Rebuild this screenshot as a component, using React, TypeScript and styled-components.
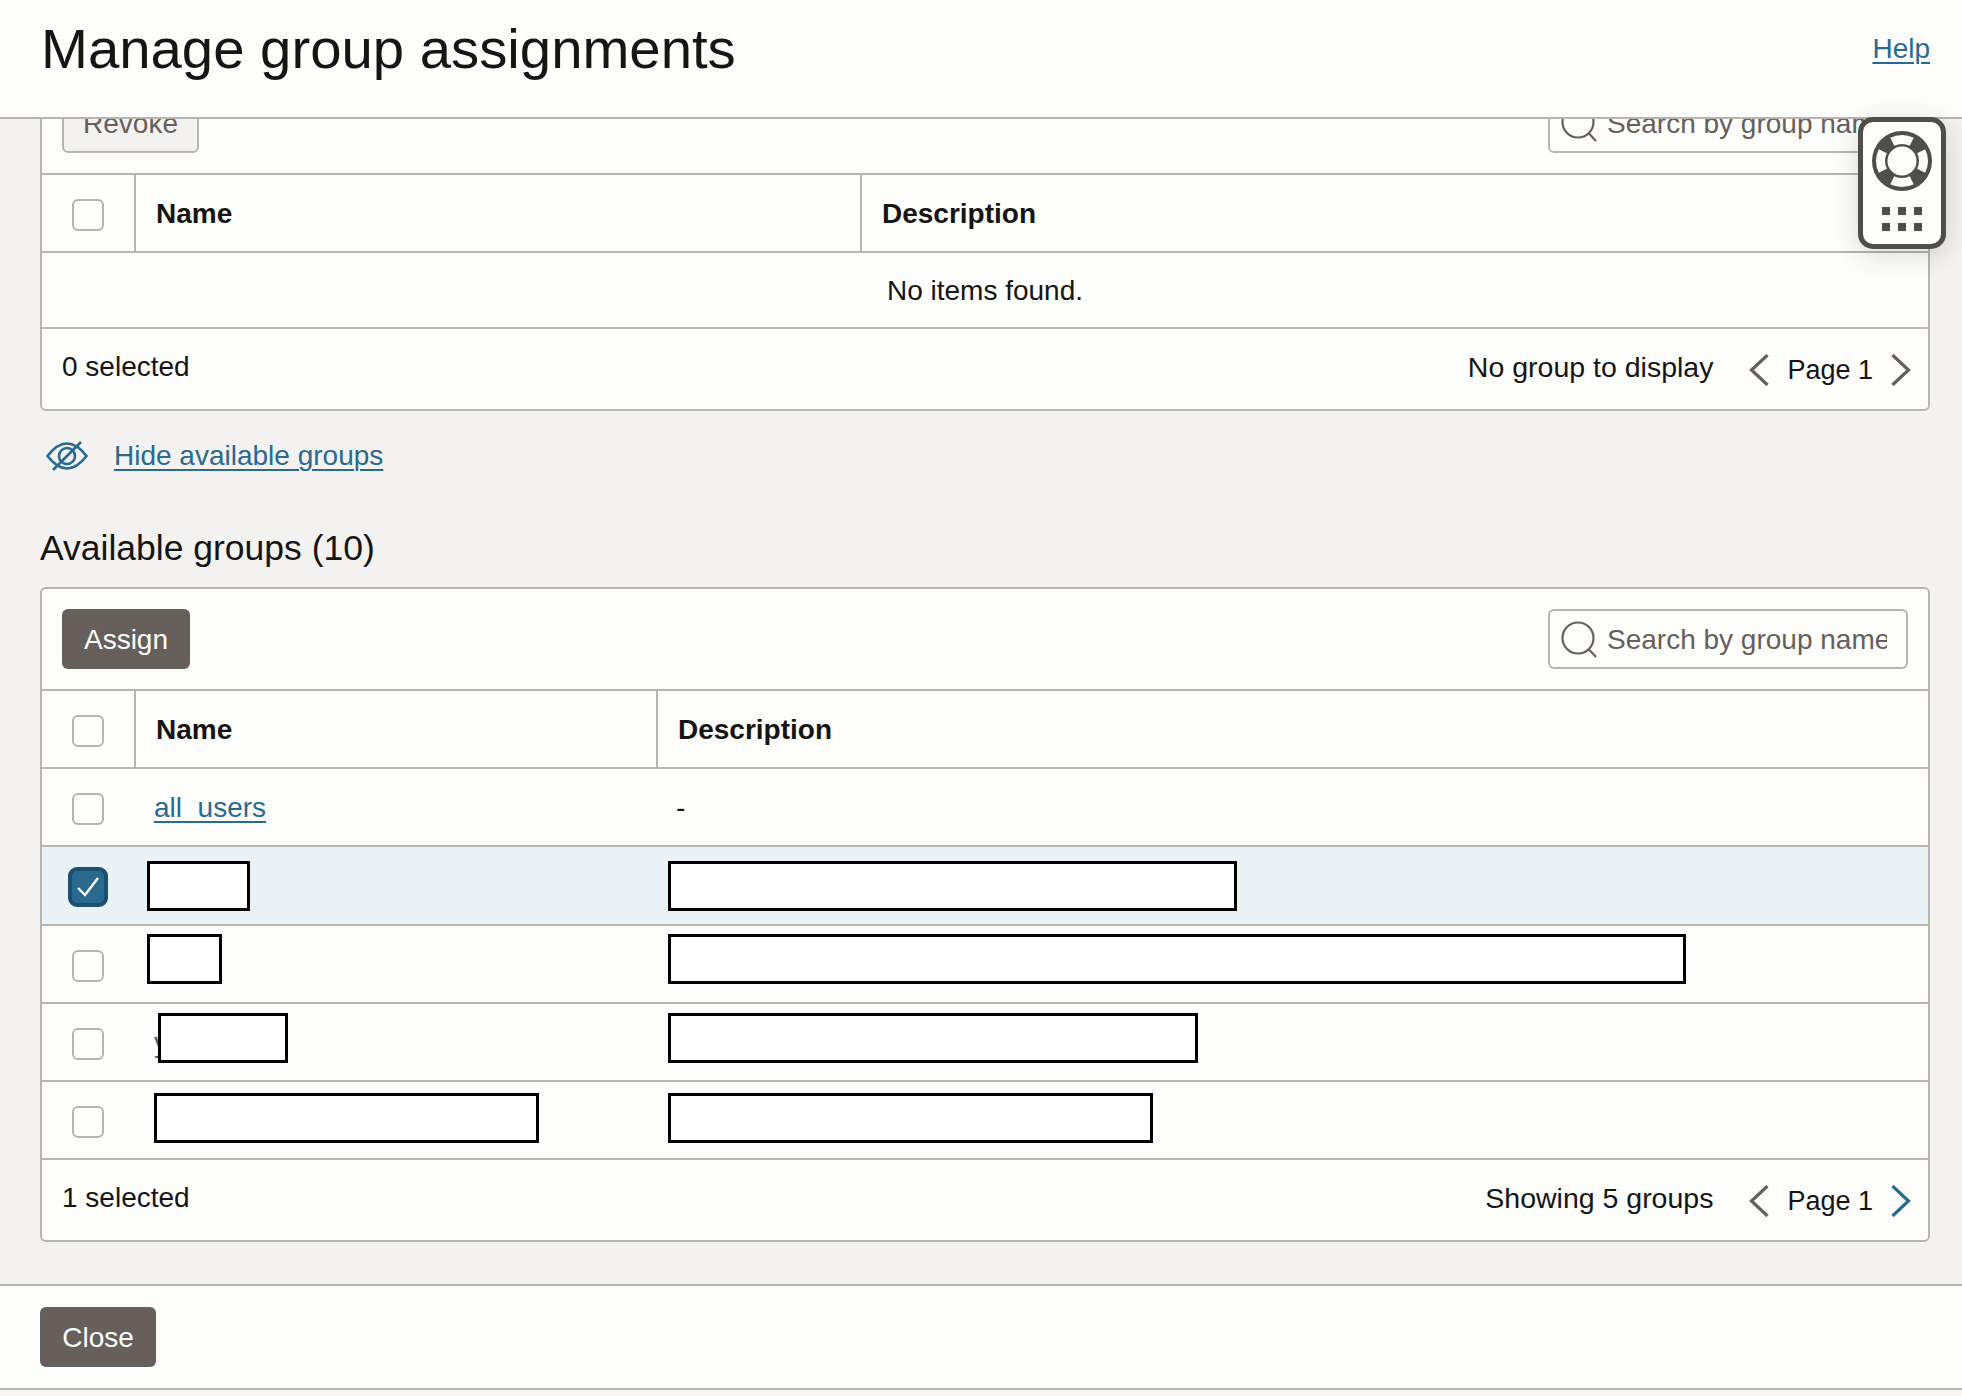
import React, { FC } from 'react'
import styled, { createGlobalStyle } from 'styled-components'

const colors = {
    panel: '#fdfdfb',
    page: '#f3f2f1',
    line: '#b8b4ae',
    text: '#161513',
    muted: '#665f5b',
    link: '#2a6a8f',
    button: '#665f5b',
    selected: '#eaf2f6',
    widget: '#504e4b',
}

const GlobalStyle = createGlobalStyle`
    html, body {
        margin: 0;
        padding: 0;
        height: 100%;
    }
    body {
        font-family: "Liberation Sans", Arial, sans-serif;
        font-size: 28px;
        color: ${colors.text};
        background: #f7f6f5;
    }
`

const Page = styled.div`
    position: relative;
    display: flex;
    flex-direction: column;
    height: 1396px;
    overflow: hidden;
`
const Header = styled.header`
    display: flex;
    flex: none;
    justify-content: space-between;
    align-items: center;
    box-sizing: border-box;
    height: 119px;
    padding: 0 32px 19px 41px;
    background: ${colors.panel};
    border-bottom: 2px solid ${colors.line};
`
const Title = styled.h1`
    margin: 0;
    font-size: 56.3px;
    font-weight: 400;
    line-height: 64px;
`
const TextLink = styled.a`
    color: ${colors.link};
    text-decoration: underline;
    text-underline-offset: 4px;
    text-decoration-thickness: 2px;
    cursor: pointer;
`
const Content = styled.main`
    flex: 1;
    min-height: 0;
    overflow: hidden;
    padding: 0 32px 0 40px;
    background: ${colors.page};
`
const ScrolledInner = styled.div`
    margin-top: -48px;
`
const Card = styled.section`
    box-sizing: border-box;
    background: ${colors.panel};
    border: 2px solid ${colors.line};
    border-radius: 6px;
`
const Toolbar = styled.div`
    display: flex;
    justify-content: space-between;
    align-items: center;
    box-sizing: border-box;
    height: 100px;
    padding: 0 20px;
`
const Button = styled.button<{ $width: number; $disabled?: boolean }>`
    box-sizing: border-box;
    width: ${p => p.$width}px;
    height: 60px;
    padding: 2px 0 0;
    font: inherit;
    font-size: 28px;
    color: ${p => (p.$disabled ? colors.muted : colors.panel)};
    background: ${p => (p.$disabled ? colors.page : colors.button)};
    border: ${p => (p.$disabled ? `2px solid ${colors.line}` : 'none')};
    border-radius: 6px;
`
const SearchBox = styled.label`
    display: flex;
    align-items: center;
    box-sizing: border-box;
    width: 360px;
    height: 60px;
    padding: 0 19px 0 11px;
    border: 2px solid ${colors.line};
    border-radius: 6px;
    background: ${colors.panel};
`
const SearchIcon = styled.svg`
    flex: none;
    width: 38px;
    height: 38px;
    margin-right: 8px;
    margin-top: 2px;
`
const SearchInput = styled.input`
    flex: 1;
    min-width: 0;
    padding: 2px 0 0;
    border: none;
    outline: none;
    background: transparent;
    font: inherit;
    font-size: 28px;
    color: ${colors.muted};
    &::placeholder {
        color: ${colors.muted};
        opacity: 1;
    }
`
const Row = styled.div<{ $nameWidth: number; $selected?: boolean }>`
    position: relative;
    display: grid;
    grid-template-columns: 92px ${p => p.$nameWidth}px 1fr;
    align-items: center;
    box-sizing: border-box;
    height: 78.25px;
    border-top: 2px solid ${colors.line};
    background: ${p => (p.$selected ? colors.selected : 'transparent')};
`
const HeadRow = styled(Row)`
    height: 78px;
`
const HeadCell = styled.div<{ $divider?: boolean }>`
    display: flex;
    align-items: center;
    box-sizing: border-box;
    height: 100%;
    padding: 2px 0 0 20px;
    font-weight: 700;
    font-size: 28px;
    border-left: ${p => (p.$divider ? `2px solid ${colors.line}` : 'none')};
`
const Cell = styled.div`
    padding: 2px 0 0 20px;
    white-space: nowrap;
`
const CheckCell = styled.div`
    display: flex;
    justify-content: center;
    align-items: center;
    height: 100%;
    padding-top: 4px;
    box-sizing: border-box;
`
const Check = styled.span<{ $checked?: boolean }>`
    display: flex;
    justify-content: center;
    align-items: center;
    box-sizing: border-box;
    width: ${p => (p.$checked ? 40 : 32)}px;
    height: ${p => (p.$checked ? 40 : 32)}px;
    border: ${p => (p.$checked ? '4px solid #1d4f6e' : `2px solid ${colors.line}`)};
    border-radius: ${p => (p.$checked ? 9 : 6)}px;
    background: ${p => (p.$checked ? colors.link : colors.panel)};
`
const Redaction = styled.div<{ $left: number; $top: number; $width: number }>`
    position: absolute;
    left: ${p => p.$left}px;
    top: ${p => p.$top}px;
    width: ${p => p.$width}px;
    height: 50px;
    box-sizing: border-box;
    background: #fff;
    border: 3px solid #000;
`
const EmptyRow = styled.div`
    display: flex;
    justify-content: center;
    align-items: center;
    box-sizing: border-box;
    height: 76px;
    padding-top: 2px;
    border-top: 2px solid ${colors.line};
`
const CardFooter = styled.div`
    display: flex;
    justify-content: space-between;
    align-items: flex-start;
    box-sizing: border-box;
    height: 82px;
    padding: 22px 17px 0 20px;
    border-top: 2px solid ${colors.line};
    line-height: 32px;
`
const FooterRight = styled.div`
    display: flex;
    align-items: flex-start;
    font-size: 28.5px;
`
const Pager = styled.div`
    display: flex;
    align-items: center;
    gap: 18px;
    margin: 3px 0 0 36px;
    font-size: 27px;
`
const Chevron = styled.svg`
    flex: none;
    width: 20px;
    height: 32px;
`
const ToggleRow = styled.div`
    display: flex;
    align-items: center;
    gap: 26px;
    height: 32px;
    margin: 29px 0 0 6px;
`
const SectionTitle = styled.h2`
    margin: 55px 0 18px;
    font-size: 35.5px;
    font-weight: 400;
    line-height: 42px;
`
const PageFooter = styled.footer`
    display: flex;
    flex: none;
    align-items: flex-start;
    box-sizing: border-box;
    height: 106px;
    padding: 21px 0 0 40px;
    margin-bottom: 6px;
    background: ${colors.panel};
    border-top: 2px solid ${colors.line};
    border-bottom: 2px solid ${colors.line};
`
const Widget = styled.aside`
    position: absolute;
    top: 117px;
    left: 1858px;
    display: flex;
    flex-direction: column;
    align-items: center;
    box-sizing: border-box;
    width: 88px;
    height: 132px;
    padding-top: 9px;
    background: ${colors.panel};
    border: 5px solid ${colors.widget};
    border-radius: 15px;
    box-shadow: 0 6px 26px rgba(0, 0, 0, 0.14);
`
const Grip = styled.div`
    display: grid;
    grid-template-columns: repeat(3, 8px);
    grid-auto-rows: 8px;
    gap: 8px;
    margin-top: 16px;
`
const GripDot = styled.span`
    background: ${colors.widget};
`

const PagerChevron: FC<{ dir: 'left' | 'right'; active?: boolean }> = ({ dir, active }) => (
    <Chevron viewBox="0 0 20 32" fill="none">
        <path
            d={dir === 'left' ? 'M18.500 1 2.500 16l16 15' : 'M1.500 1l16 15-16 15'}
            stroke={active ? colors.link : colors.muted}
            strokeWidth="3.200"
        />
    </Chevron>
)

const Search: FC<{}> = () => (
    <SearchBox>
        <SearchIcon viewBox="0 0 38 38" fill="none">
            <circle cx="17" cy="17" r="15.500" stroke={colors.muted} strokeWidth="2.200" />
            <path d="M27.500 28 35 36" stroke={colors.muted} strokeWidth="2.200" />
        </SearchIcon>
        <SearchInput placeholder="Search by group name" />
    </SearchBox>
)

const groups = [
    { id: 1, selected: true, boxes: [{ left: 105, top: 14, width: 103 }, { left: 626, top: 14, width: 569 }] },
    { id: 2, boxes: [{ left: 105, top: 8, width: 75 }, { left: 626, top: 8, width: 1018 }] },
    { id: 3, peek: 'y', boxes: [{ left: 116, top: 9, width: 130 }, { left: 626, top: 9, width: 530 }] },
    { id: 4, boxes: [{ left: 112, top: 11, width: 385 }, { left: 626, top: 11, width: 485 }] },
]

const NAME_WIDTH = 522

export default function App() {
    return (
        <Page>
            <GlobalStyle />
            <Header>
                <Title>Manage group assignments</Title>
                <TextLink>Help</TextLink>
            </Header>
            <Content>
                <ScrolledInner>
                    <Card>
                        <Toolbar>
                            <Button $width={137} $disabled>Revoke</Button>
                            <Search />
                        </Toolbar>
                        <HeadRow $nameWidth={726}>
                            <CheckCell><Check /></CheckCell>
                            <HeadCell $divider>Name</HeadCell>
                            <HeadCell $divider>Description</HeadCell>
                        </HeadRow>
                        <EmptyRow>No items found.</EmptyRow>
                        <CardFooter>
                            <span>0 selected</span>
                            <FooterRight>
                                <span>No group to display</span>
                                <Pager>
                                    <PagerChevron dir="left" />
                                    <span>Page 1</span>
                                    <PagerChevron dir="right" />
                                </Pager>
                            </FooterRight>
                        </CardFooter>
                    </Card>
                    <ToggleRow>
                        <svg width="42" height="32" viewBox="0 0 42 32" fill="none">
                            <path d="M1.500 16C8 7.500 14 3.500 21 3.500S34 7.500 40.500 16C34 24.500 28 28.500 21 28.500S8 24.500 1.500 16Z" stroke={colors.link} strokeWidth="2.600" />
                            <circle cx="21" cy="16" r="8" stroke={colors.link} strokeWidth="2.600" />
                            <path d="M35 2 7 30" stroke={colors.link} strokeWidth="2.600" />
                        </svg>
                        <TextLink>Hide available groups</TextLink>
                    </ToggleRow>
                    <SectionTitle>Available groups (10)</SectionTitle>
                    <Card>
                        <Toolbar>
                            <Button $width={128}>Assign</Button>
                            <Search />
                        </Toolbar>
                        <HeadRow $nameWidth={NAME_WIDTH}>
                            <CheckCell><Check /></CheckCell>
                            <HeadCell $divider>Name</HeadCell>
                            <HeadCell $divider>Description</HeadCell>
                        </HeadRow>
                        <Row $nameWidth={NAME_WIDTH}>
                            <CheckCell><Check /></CheckCell>
                            <Cell><TextLink>all_users</TextLink></Cell>
                            <Cell>-</Cell>
                        </Row>
                        {groups.map(item => (
                            <Row key={item.id} $nameWidth={NAME_WIDTH} $selected={item.selected}>
                                <CheckCell>
                                    <Check $checked={item.selected}>
                                        {item.selected && (
                                            <svg width="24" height="24" viewBox="0 0 24 24" fill="none">
                                                <path d="M2 13l7 7L22 3" stroke="#fff" strokeWidth="2.400" />
                                            </svg>
                                        )}
                                    </Check>
                                </CheckCell>
                                <Cell>{item.peek && <TextLink>{item.peek}</TextLink>}</Cell>
                                <Cell />
                                {item.boxes.map(box => (
                                    <Redaction key={box.left} $left={box.left} $top={box.top} $width={box.width} />
                                ))}
                            </Row>
                        ))}
                        <CardFooter>
                            <span>1 selected</span>
                            <FooterRight>
                                <span>Showing 5 groups</span>
                                <Pager>
                                    <PagerChevron dir="left" />
                                    <span>Page 1</span>
                                    <PagerChevron dir="right" active />
                                </Pager>
                            </FooterRight>
                        </CardFooter>
                    </Card>
                </ScrolledInner>
            </Content>
            <PageFooter>
                <Button $width={116}>Close</Button>
            </PageFooter>
            <Widget>
                <svg width="60" height="60" viewBox="0 0 60 60">
                    <circle cx="30" cy="30" r="30" fill={colors.widget} />
                    <circle
                        cx="30"
                        cy="30"
                        r="21.500"
                        fill="none"
                        stroke={colors.panel}
                        strokeWidth="9"
                        pathLength={360}
                        strokeDasharray="54 36"
                        strokeDashoffset="27"
                    />
                    <circle cx="30" cy="30" r="14.500" fill={colors.panel} />
                </svg>
                <Grip>
                    {[0, 1, 2, 3, 4, 5].map(i => (
                        <GripDot key={i} />
                    ))}
                </Grip>
            </Widget>
        </Page>
    )
}
